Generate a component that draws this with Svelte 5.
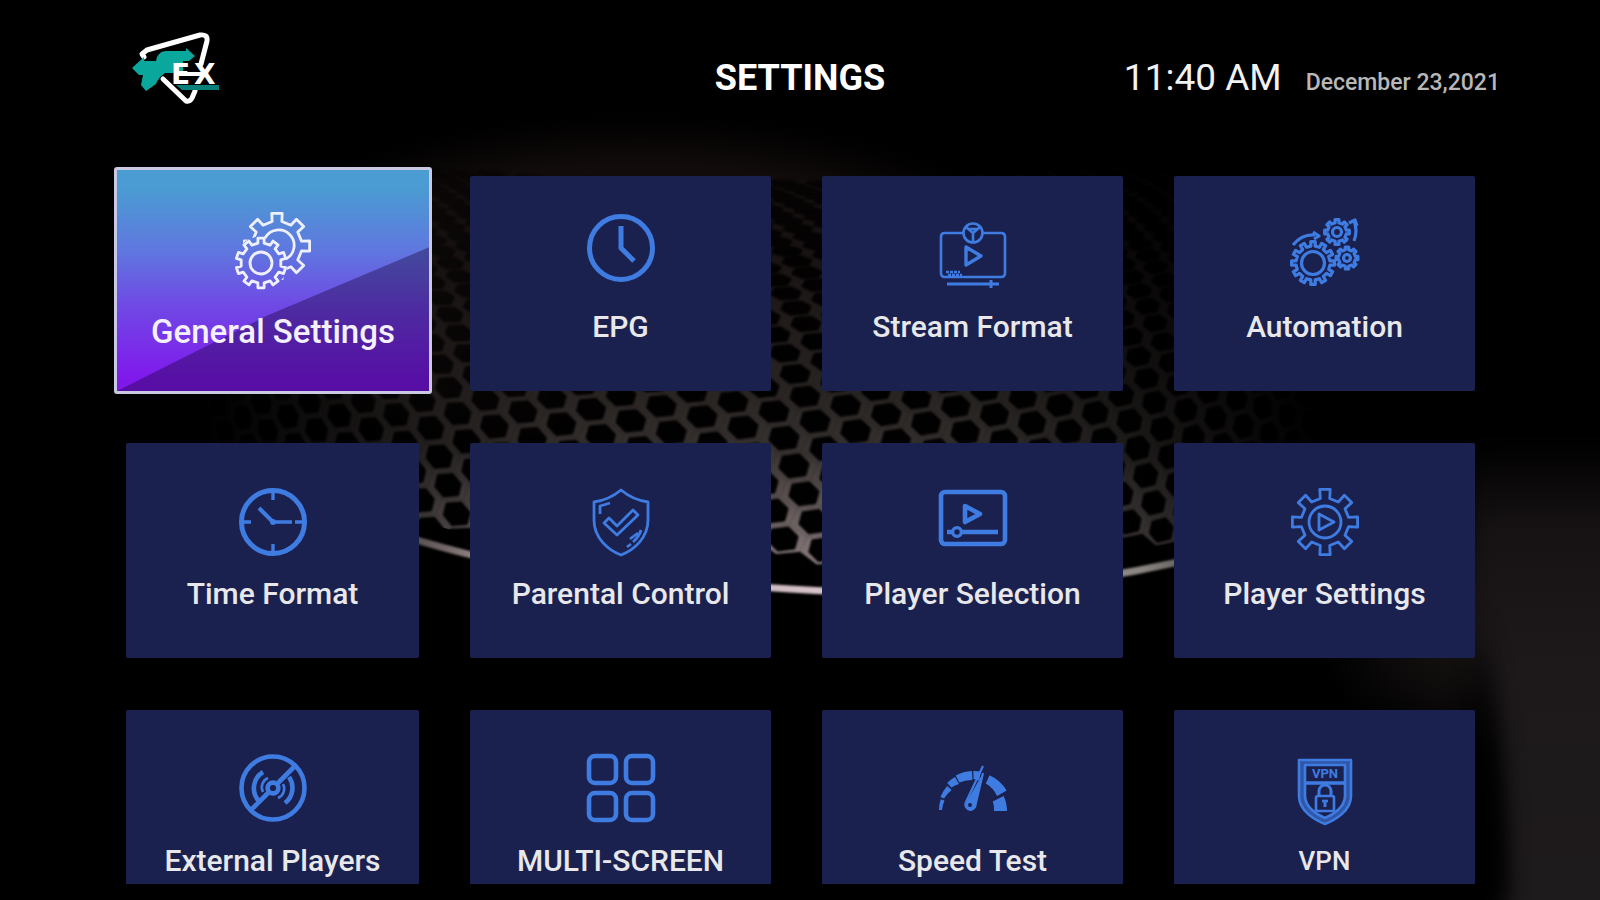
<script>
  const tiles = [
    { id: 'general', label: 'General Settings', active: true },
    { id: 'epg', label: 'EPG' },
    { id: 'stream', label: 'Stream Format' },
    { id: 'automation', label: 'Automation' },
    { id: 'time', label: 'Time Format' },
    { id: 'parental', label: 'Parental Control' },
    { id: 'selection', label: 'Player Selection' },
    { id: 'player', label: 'Player Settings' },
    { id: 'external', label: 'External Players' },
    { id: 'multi', label: 'MULTI-SCREEN' },
    { id: 'speed', label: 'Speed Test' },
    { id: 'vpn', label: 'VPN', small: true }
  ];

  // Closed outline of a cog wheel with flat teeth.
  function gear(cx, cy, outer, root, teeth, turn = 0) {
    const step = (Math.PI * 2) / teeth;
    const pts = [];
    for (let i = 0; i < teeth; i++) {
      const a = i * step - Math.PI / 2 + turn;
      for (const [r, o] of [[root, -0.25], [outer, -0.2], [outer, 0.2], [root, 0.25]]) {
        pts.push((cx + r * Math.cos(a + o * step)).toFixed(1) + ' ' + (cy + r * Math.sin(a + o * step)).toFixed(1));
      }
    }
    return 'M' + pts.join('L') + 'Z';
  }

  // Part of a ring between two radii; angles in degrees, 0 pointing right.
  function band(cx, cy, r, w0, w1, from, to) {
    const p = (rad, deg) => {
      const a = (deg * Math.PI) / 180;
      return (cx + rad * Math.cos(a)).toFixed(1) + ' ' + (cy + rad * Math.sin(a)).toFixed(1);
    };
    return `M${p(r, from)}A${r} ${r} 0 0 1 ${p(r, to)}L${p(r - w1, to)}A${r - w1} ${r - w1} 0 0 0 ${p(r - w0, from)}Z`;
  }

  // Honeycomb speaker grille, bent around a drum and flattened toward the top.
  // Each cell has the outline of its metal and the smaller outline of its hole.
  const METAL = [[17, 13], [-7, 15], [-24, 2], [-17, -13], [7, -15], [24, -2]];
  const HOLE = [[11, 9], [-5, 11], [-14, 2], [-11, -9], [5, -11], [14, -2]];
  function grille() {
    const cells = [];
    const warp = (u, v) => {
      const x = 760 + 640 * Math.sin(Math.max(-1.5, Math.min(1.5, u / 640)));
      const y = v > 0 ? 440 + v : 440 - 290 * (1 - Math.exp(v / 290));
      return [x, y - ((x - 760) * (x - 760)) / 9000];
    };
    for (let i = -34; i <= 34; i++) {
      for (let j = -50; j <= 50; j++) {
        const u = 34 + i * 41 - j * 31;
        const v = 26 + i * 11 + j * 17;
        if (Math.abs(u) > 800 || v > 110 || v < -640) continue;
        const outline = (shape) => shape.map(([dx, dy]) => warp(u + dx, v + dy).map((n) => n.toFixed(1)).join(',')).join(' ');
        cells.push({ metal: outline(METAL), hole: outline(HOLE) });
      }
    }
    return cells;
  }
  const cells = grille();
</script>

{#snippet icon(id)}
  <svg class="icon" viewBox="-40 -40 80 80" aria-hidden="true">
    {#if id === 'general'}
      <mask id="behind"><rect x="-40" y="-40" width="80" height="80" fill="#fff" /><circle cx="-12" cy="12" r="27" fill="#000" /></mask>
      <g stroke-width="2.8">
        <g mask="url(#behind)">
          <path d={gear(4, -5, 33, 25, 8)} />
        </g>
        <path d="M-8-13A15.5 15.5 0 1 1 13 8" />
        <path d={gear(-12, 12, 25, 20, 10)} />
        <circle cx="-12" cy="12" r="11" />
      </g>
    {:else if id === 'epg'}
      <g stroke-width="5"><circle cy="-5" r="31.5" /><path d="M0-27V-5L13 8" stroke-linejoin="miter" /></g>
    {:else if id === 'stream'}
      <g stroke-width="2.6">
        <path d="M-10-20H-28Q-32-20-32-16V20Q-32 24-28 24H28Q32 24 32 20V-16Q32-20 28-20H10" />
        <circle cy="-20" r="9.5" /><path d="M-7-26L0-20L7-26M0-20V-11M-5-24H5" />
        <path d="M-7-6L8 3L-7 12Z" stroke-width="3.4" />
        <path d="M-26 31H26M18 27V35" stroke-width="3" />
        <path d="M-27 19H-13M-25 22H-11" stroke-dasharray="3 1" />
      </g>
    {:else if id === 'automation'}
      <g stroke-width="3.2">
        <path d={gear(-12, 10, 21.5, 17, 12)} /><circle cx="-12" cy="10" r="11.5" />
        <path d={gear(12, -21, 12.5, 9.5, 8)} /><circle cx="12" cy="-21" r="4.5" />
        <path d={gear(22, 5, 11, 8.5, 8)} /><circle cx="22" cy="5" r="3.5" />
        <path d="M-32-8Q-23-19-10-18M-12-21L-6-17L-11-14M29-12Q33-22 29-32M24-30L30-33L32-27" />
      </g>
    {:else if id === 'time'}
      <g stroke-width="5"><circle cy="2" r="31.5" />
        <path d="M0-29V-20M0 24V32M-31 2H-22M22 2H31M2 2H19" stroke-width="3.4" /><path d="M-14-12L0 2" stroke-width="4" /></g><circle cy="2" r="3" class="solid" />
    {:else if id === 'parental'}
      <g stroke-width="2.8">
        <path d="M0-30Q-12-20-27-18V0C-27 18-13 30 0 35C13 30 27 18 27 0V-18Q12-20 0-30Z" />
        <path d="M-17 3L-12-2L-4 6L12-10L17-5L-4 15Z" />
        <path d="M-21-6V-14L-11-17M6 27L10 24M12 22Q18 17 20 10M9 19L17 13" />
      </g>
    {:else if id === 'selection'}
      <g stroke-width="4.6"><rect x="-32" y="-28" width="64" height="52" rx="4" /><path d="M-8-14L7-6L-8 2Z" /><path d="M-26 12H-20M-12 12H25" /><circle cx="-16" cy="12" r="4.4" stroke-width="3.4" /></g>
    {:else if id === 'player'}
      <g stroke-width="2.8"><path d={gear(0, 2, 33, 24, 8)} /><circle cy="2" r="16" /><path d="M-6-6L9 2L-6 10Z" /></g>
    {:else if id === 'external'}
      <g stroke-width="4.6"><circle cy="1" r="31.5" /><circle cy="1" r="5.4" /><path d="M5-4L21-20M-5 6L-21 22M-10-15A19 19 0 0 0-15 13M12 16A19 19 0 0 0 16-10" /><path d="M-10 5A10 10 0 0 1-5-9M10-3A10 10 0 0 1 5 11" stroke-width="2.6" /></g>
    {:else if id === 'multi'}
      <g stroke-width="4.6"><rect x="-32" y="-31" width="27" height="27" rx="6" /><rect x="5" y="-31" width="27" height="27" rx="6" /><rect x="-32" y="6" width="27" height="27" rx="6" /><rect x="5" y="6" width="27" height="27" rx="6" /></g>
    {:else if id === 'speed'}
      <g class="solid">
        <path d={band(1, 23, 35, 3, 4, 180, 198)} /><path d={band(1, 23, 36, 4, 6, 201, 222)} /><path d={band(1, 23, 38, 6, 8, 225, 240)} />
        <path d={band(1, 23, 39, 8, 9, 242, 267)} /><path d={band(1, 23, 39, 8, 9, 269, 280)} /><path d={band(1, 23, 38, 9, 11, 294, 329)} /><path d={band(0, 24, 34, 12, 13, 334, 360)} />
      </g>
      <path d="M10-14L-7 16A5 5 0 0 0 2 21Z" class="solid" />
      <path d="M10-21L-7 15A5 5 0 0 0 2 20L10-14" stroke-width="2.2" /><circle cx="-3" cy="18" r="2" class="hole" />
    {:else if id === 'vpn'}
      <g stroke-width="2.6">
        <path d="M-26-27H26V9C26 24 10 33 0 37C-10 33-26 24-26 9Z" /><path d="M-20-22H20V9C20 20 8 28 0 31C-8 28-20 20-20 9Z" />
        <path d="M-23-24H23V9C23 22 9 30 0 34C-9 30-23 22-23 9Z" stroke-width="4" opacity=".6" />
        <path d="M-19-4H19" stroke-width="3.4" />
        <rect x="-9" y="9" width="18" height="15" rx="2" /><path d="M-6 9V4A6 6 0 0 1 6 4V9M0 14V20" stroke-width="3" /><path d="M-3 14H3" />
      </g>
      <text x="0" y="-9" text-anchor="middle">VPN</text>
    {/if}
  </svg>
{/snippet}

<div class="page">
  <svg class="backdrop" viewBox="0 0 1600 900" preserveAspectRatio="xMidYMid slice" aria-hidden="true">
    <defs>
      <linearGradient id="wire" gradientUnits="userSpaceOnUse" x1="0" y1="120" x2="0" y2="560">
        <stop offset="0" stop-color="#130e0d" /><stop offset=".3" stop-color="#191413" /><stop offset=".62" stop-color="#2a2624" /><stop offset=".76" stop-color="#393432" /><stop offset=".9" stop-color="#6a6060" /><stop offset="1" stop-color="#8c7e80" />
      </linearGradient>
      <radialGradient id="spot" gradientUnits="userSpaceOnUse" cx="760" cy="440" r="560" gradientTransform="translate(0 40) scale(1 .9)">
        <stop offset="0" stop-color="#fff" /><stop offset=".35" stop-color="#eee" /><stop offset=".62" stop-color="#999" /><stop offset=".8" stop-color="#555" /><stop offset="1" stop-color="#000" />
      </radialGradient>
      <radialGradient id="dome"><stop offset="0" stop-color="#191312" /><stop offset=".7" stop-color="#110c0b" /><stop offset="1" stop-color="#0a0706" stop-opacity="0" /></radialGradient>
      <radialGradient id="glow"><stop offset="0" stop-color="#1a1515" /><stop offset="1" stop-color="#1a1515" stop-opacity="0" /></radialGradient>
      <linearGradient id="side" gradientUnits="userSpaceOnUse" x1="0" y1="440" x2="0" y2="900"><stop offset="0" stop-color="#171213" stop-opacity="0" /><stop offset=".2" stop-color="#171314" /><stop offset=".5" stop-color="#1d191a" /><stop offset="1" stop-color="#1e1b1c" /></linearGradient>
      <linearGradient id="rim" x1="0" y1="0" x2="1" y2="0"><stop offset="0" stop-color="#4f4747" stop-opacity="0" /><stop offset=".2" stop-color="#9f9090" /><stop offset=".5" stop-color="#d6c2c8" /><stop offset=".8" stop-color="#8a8580" /><stop offset="1" stop-color="#444" stop-opacity="0" /></linearGradient>
      <mask id="lit"><rect width="1600" height="900" fill="url(#spot)" /></mask>
      <filter id="soft" color-interpolation-filters="sRGB"><feGaussianBlur stdDeviation="1" /></filter>
      <filter id="haze" x="-1" y="-.2" width="3" height="1.4" color-interpolation-filters="sRGB"><feGaussianBlur stdDeviation="12" /></filter>
    </defs>
    <rect width="1600" height="900" />
    <ellipse cx="640" cy="290" rx="440" ry="180" fill="url(#dome)" />
    <g mask="url(#lit)">
      <g filter="url(#soft)" stroke-linejoin="round">
        <g fill="url(#wire)">
          {#each cells as cell}<polygon points={cell.metal} />{/each}
        </g>
        <g fill="#020101" stroke="#020101" stroke-width="3">
          {#each cells as cell}<polygon points={cell.hole} />{/each}
        </g>
      </g>
    </g>
    <path d="M270 470Q420 526 500 541T790 568T1174 543T1360 480V900H270Z" fill="#000" />
    <path d="M270 490Q420 546 500 561T790 589T1174 563T1360 500" fill="none" stroke="url(#rim)" stroke-width="7" filter="url(#soft)" />
    <ellipse cx="1475" cy="640" rx="160" ry="110" fill="url(#glow)" />
    <path d="M1468 400H1660V960H1502Q1506 760 1468 600Z" fill="url(#side)" filter="url(#haze)" />
    <path d="M1476 620V900H1503Q1506 750 1476 620Z" fill="#000" filter="url(#haze)" />
  </svg>

  <header>
    <svg class="logo" viewBox="20 10 90 76" role="img" aria-label="EX">
      <g fill="none" stroke="#fff" stroke-width="5" stroke-linejoin="round" stroke-linecap="round">
        <path d="M34 37L32 34L37 30L90 15Q98 14 97 21L91 44" /><path d="M53 59L76 81Q80 82 82 78L85 71" />
      </g>
      <path d="M47 37Q50 31 56 31H76V28L85 36L79 41H46ZM22 48L34 37V41H73V53H55Q48 58 46 64L36 71L31 65L33 55H29Z" fill="#0aa79d" />
      <path d="M66 65H109V70H72Z" fill="#0b7f79" />
      <text x="61" y="64">E</text>
      <text x="84" y="64">X</text>
      <path d="M68 54H94" stroke="#fff" stroke-width="4" />
    </svg>
    <h1>SETTINGS</h1>
    <div class="clock"><time class="hour">11:40 AM</time><time class="date">December 23,2021</time></div>
  </header>

  <main>
    {#each tiles as tile}
      <button type="button" class="tile" class:active={tile.active}>
        {@render icon(tile.id)}
        <span class="label" class:small={tile.small}>{tile.label}</span>
      </button>
    {/each}
  </main>
</div>

<style>
  :global(body) { background: #000; }
  .page { position: relative; box-sizing: border-box; height: 100vh; padding-bottom: 16px; overflow: hidden; display: flex; flex-direction: column; font-family: Roboto, sans-serif; color: #f2f2f2; background: #000; }
  .backdrop { position: absolute; inset: 0; width: 100%; height: 100%; }
  header { position: relative; display: grid; grid-template-columns: 1fr auto 1fr; padding: 30px 100px 0; flex: none; }
  .logo { width: 90px; height: 76px; margin-left: 30px; }
  .logo text { font: bold 28px "DejaVu Sans", sans-serif; fill: #fff; }
  h1 { margin: 0; padding-top: 28px; font-size: 36px; line-height: 40px; font-weight: 700; color: #fff; }
  .clock { display: flex; justify-content: flex-end; align-items: baseline; gap: 24px; padding-top: 28px; white-space: nowrap; }
  .hour { font-size: 37px; line-height: 40px; }
  .date { font-size: 23px; font-weight: 500; color: #b8b8b8; }
  main { position: relative; flex: 1; min-height: 0; overflow: hidden; display: grid; grid-template-columns: 293fr 301fr 301fr 301fr; grid-auto-rows: 215px; gap: 52px 51px; padding: 70px 125px 0 126px; }
  .tile { position: relative; display: flex; flex-direction: column; align-items: center; gap: 17px; margin: 0; padding: 37px 0 0; border: 0; border-radius: 2px; background: #1b214f; color: #e8e8ea; font-family: inherit; cursor: pointer; }
  .icon { position: relative; width: 80px; height: 80px; flex: none; fill: none; stroke: #3f7ce2; stroke-linejoin: round; }
  .icon .solid { fill: #3f7ce2; stroke: none; }
  .icon .hole { fill: #1b214f; stroke: none; }
  .icon text { font: bold 13px Roboto, sans-serif; fill: #3f7ce2; stroke: none; }
  .label { position: relative; font-size: 30px; line-height: 34px; font-weight: 500; white-space: nowrap; }
  .label.small { font-size: 26px; }
  .active { margin: -9px -13px -3px -12px; padding-top: 41px; gap: 24px; border: 3px solid #c9c9e4; border-radius: 3px; background: linear-gradient(#4a9cd2 8%, #5f78df 36%, #7048e5 62%, #8018ec 95%); color: #f4f0ff; }
  .active::before { content: ""; position: absolute; inset: 0; background: rgba(22, 0, 50, 0.38); clip-path: polygon(0 100%, 48% 66%, 100% 35%, 100% 100%); }
  .active .icon { stroke: #eef0ff; }
  .active .label { font-size: 33px; }
</style>
